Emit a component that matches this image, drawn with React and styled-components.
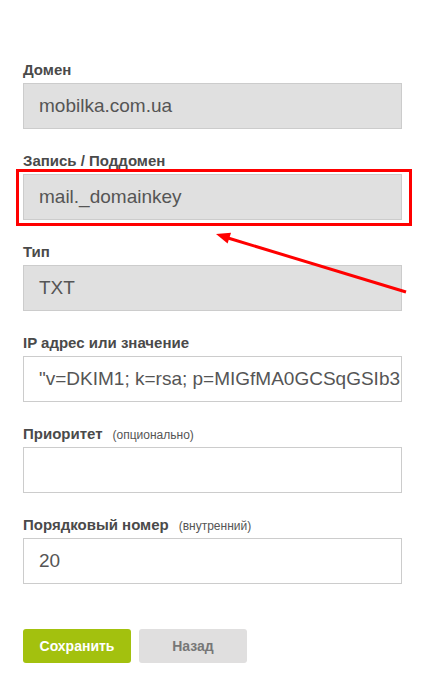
import React from "react";
import styled, { createGlobalStyle } from "styled-components";

const GlobalStyle = createGlobalStyle`
  body {
    margin: 0;
    background: #fff;
    font-family: "Liberation Sans", Arial, sans-serif;
  }
`;

const Page = styled.div`
  position: relative;
  width: 432px;
  min-height: 690px;
  padding: 62px 0 0 23px;
  box-sizing: border-box;
`;

const Form = styled.form`
  width: 379px;
  display: flex;
  flex-direction: column;
`;

const Group = styled.div`
  position: relative;
  margin-bottom: 24px;
`;

const Label = styled.div`
  height: 16px;
  font-size: 15px;
  line-height: 16px;
  font-weight: bold;
  color: #4a4a4a;
  margin-bottom: 5px;
  white-space: nowrap;
`;

const Hint = styled.span`
  font-size: 12px;
  line-height: 16px;
  font-weight: normal;
  color: #555;
  margin-left: 10px;
`;

const Field = styled.div`
  height: 46px;
  box-sizing: border-box;
  border: 1px solid #ccc;
  background: ${(p) => (p.disabled ? "#e0e0e0" : "#fff")};
  padding-left: 15px;
  font-size: 19px;
  line-height: 44px;
  color: #555;
  white-space: nowrap;
  overflow: hidden;
`;

const Highlight = styled.div`
  position: absolute;
  left: -7px;
  right: -10px;
  top: 16px;
  bottom: -6px;
  border: 3px solid #f00;
  pointer-events: none;
`;

const Buttons = styled.div`
  display: flex;
  gap: 8px;
  margin-top: 21px;
`;

const Button = styled.button`
  width: 108px;
  height: 34px;
  border: none;
  border-radius: 3px;
  font-family: "Liberation Sans", Arial, sans-serif;
  font-size: 14px;
  font-weight: bold;
  background: ${(p) => (p.primary ? "#a3c10e" : "#e0dfdf")};
  color: ${(p) => (p.primary ? "#fff" : "#777")};
  cursor: pointer;
`;

const Arrow = styled.svg`
  position: absolute;
  left: 0;
  top: 0;
  pointer-events: none;
`;

const fields = [
  { label: "Домен", value: "mobilka.com.ua", disabled: true },
  { label: "Запись / Поддомен", value: "mail._domainkey", disabled: true, marked: true },
  { label: "Тип", value: "TXT", disabled: true },
  { label: "IP адрес или значение", value: "\"v=DKIM1; k=rsa; p=MIGfMA0GCSqGSIb3DQEBAQUAA4GNADCBiQKBgQ" },
  { label: "Приоритет", hint: "(опционально)", value: "" },
  { label: "Порядковый номер", hint: "(внутренний)", value: "20" },
];

export default function App() {
  return (
    <>
      <GlobalStyle />
      <Page>
        <Form onSubmit={(e) => e.preventDefault()}>
          {fields.map((f) => (
            <Group key={f.label}>
              <Label>
                {f.label}
                {f.hint && <Hint>{f.hint}</Hint>}
              </Label>
              <Field disabled={f.disabled}>{f.value}</Field>
              {f.marked && <Highlight />}
            </Group>
          ))}
          <Buttons>
            <Button primary type="submit">Сохранить</Button>
            <Button type="button">Назад</Button>
          </Buttons>
        </Form>
        <Arrow width="432" height="690" viewBox="0 0 432 690">
          <line x1="406" y1="292" x2="228" y2="238" stroke="#f00" strokeWidth="3" />
          <polygon points="216,234 231,232.8 227.6,243.4" fill="#f00" />
        </Arrow>
      </Page>
    </>
  );
}
